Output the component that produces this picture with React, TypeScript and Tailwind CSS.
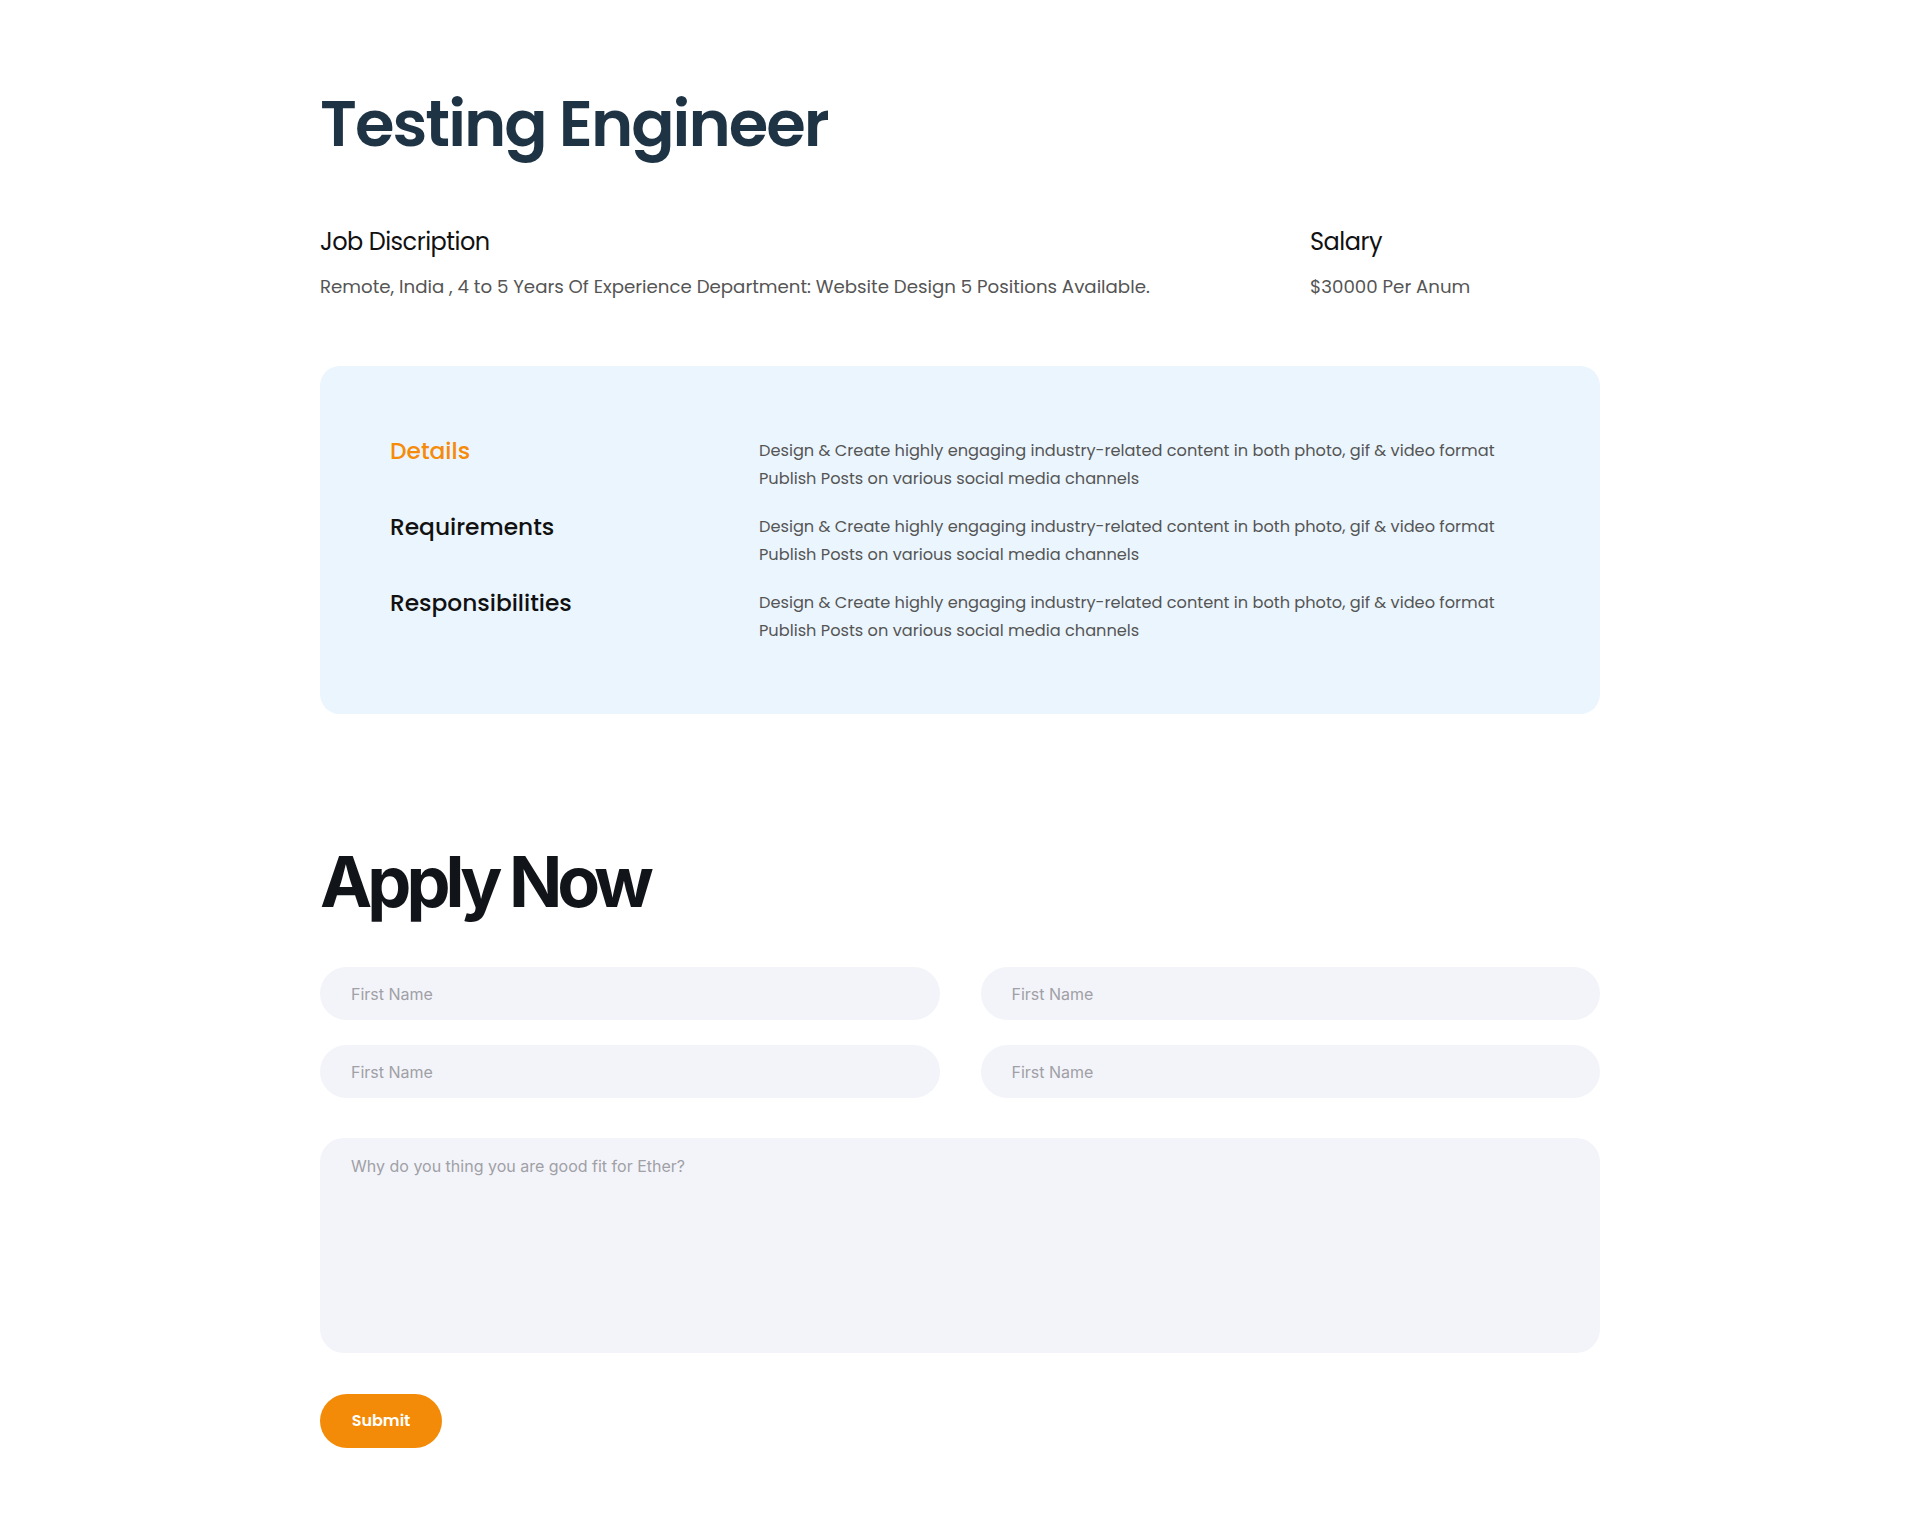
const rows = [
  { label: "Details", active: true },
  { label: "Requirements", active: false },
  { label: "Responsibilities", active: false },
];

export default function App() {
  return (
    <div className="min-h-[1538px] bg-white font-['Poppins','Open_Sans',sans-serif]">
      <div className="mx-auto w-[1280px] pt-[92px] pb-[90px]">
        {/* Header */}
        <h1 className="text-[64px] font-semibold leading-none tracking-[-2px] text-[#1e3344]">
          Testing Engineer
        </h1>

        <div className="mt-[74px] flex">
          <div className="w-[990px]">
            <h3 className="text-[24px] leading-none tracking-[-0.5px] text-[#111]">Job Discription</h3>
            <p className="mt-[24px] text-[18.2px] leading-none text-[#555]">
              Remote, India , 4 to 5 Years Of Experience Department: Website Design 5 Positions Available.
            </p>
          </div>
          <div>
            <h3 className="text-[24px] leading-none tracking-[-0.5px] text-[#111]">Salary</h3>
            <p className="mt-[24px] text-[18.2px] leading-none text-[#555]">$30000 Per Anum</p>
          </div>
        </div>

        {/* Details panel */}
        <div className="mt-[70px] rounded-[20px] bg-[#ebf5fe] px-[70px] pt-[71px] pb-[69px]">
          <div className="flex flex-col gap-[20px]">
            {rows.map((r) => (
              <div key={r.label} className="flex">
                <div
                  className={
                    "w-[369px] text-[23.3px] font-medium leading-[28px] " +
                    (r.active ? "text-[#f68b0a]" : "text-[#111]")
                  }
                >
                  {r.label}
                </div>
                <div className="text-[16.2px] leading-[28px] text-[#555]">
                  <p>Design &amp; Create highly engaging industry-related content in both photo, gif &amp; video format</p>
                  <p>Publish Posts on various social media channels</p>
                </div>
              </div>
            ))}
          </div>
        </div>

        {/* Apply form */}
        <h2 className="mt-[133px] font-['Inter',sans-serif] text-[70px] font-bold leading-none tracking-[-5px] text-[#111418]">
          Apply Now
        </h2>

        <form className="mt-[50px] font-['Inter',sans-serif]">
          <div className="grid grid-cols-2 gap-x-[41px] gap-y-[25px]">
            {[0, 1, 2, 3].map((i) => (
              <input
                key={i}
                placeholder="First Name"
                className="h-[53px] rounded-full bg-[#f3f4f9] px-[31px] text-[16px] text-[#333] placeholder:text-[#a0a0a6] outline-none"
              />
            ))}
          </div>
          <textarea
            placeholder="Why do you thing you are good fit for Ether?"
            className="mt-[40px] block h-[215px] w-full resize-none rounded-[24px] bg-[#f3f4f9] px-[31px] py-[16px] text-[16px] text-[#333] placeholder:text-[#a0a0a6] outline-none"
          />
          <button
            type="button"
            className="mt-[41px] h-[54px] w-[122px] rounded-full bg-[#f48b08] font-['Poppins','Open_Sans',sans-serif] text-[16px] font-semibold text-white"
          >
            Submit
          </button>
        </form>
      </div>
    </div>
  );
}
